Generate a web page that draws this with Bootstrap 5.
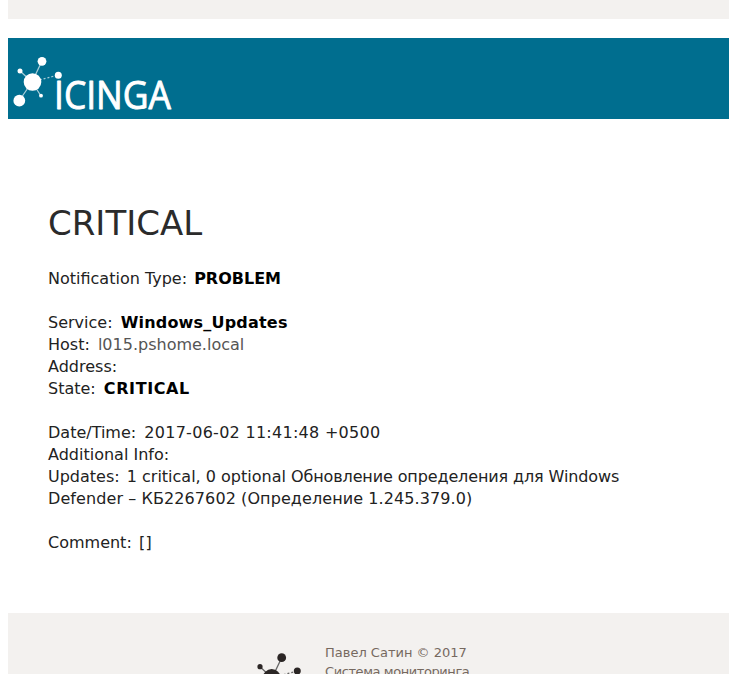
<!DOCTYPE html>
<html lang="ru">
<head>
<meta charset="utf-8">
<title>CRITICAL</title>
<link href="https://cdn.jsdelivr.net/npm/bootstrap@5.3.0/dist/css/bootstrap.min.css" rel="stylesheet">
<style>
html,body{height:674px;overflow:hidden;background:#fff}
body{padding:0 9px 0 8px;font-family:"DejaVu Sans",sans-serif;font-size:16px;line-height:22px;color:#222}
.topstrip{height:19px;background:#f3f1ef}
.brandbar{height:81px;margin-top:19px;background:#006e8f}
.brandbar svg{display:block}
.logotext{font-family:"Open Sans",sans-serif;font-size:38px;fill:#fff;stroke:#fff;stroke-width:.9px;stroke-linejoin:round}
.mailbody{padding:85px 40px 0;height:494px}
.mailbody h1{font-family:"DejaVu Sans",sans-serif;font-size:34px;line-height:38px;font-weight:400;color:#2b2b2b;margin:0 0 26px}
.mailbody b{color:#000}
.hostlink{color:#555;text-decoration:none}
.linegap{height:22px}
.lbl{margin-right:3px}
.lbl-sm{margin-right:2px}
.tight-cyr{letter-spacing:-.12px}
.wide-a{letter-spacing:.6px}
.wide-b{letter-spacing:.2px}
.wide-c{letter-spacing:.28px}
.wide-d{letter-spacing:.09px}
.footband{background:#f3f1ef;height:61px;overflow:hidden;padding-top:30px;padding-left:249px}
.footcopy{font-size:13px;line-height:19px;color:#76695f;margin-left:20px}
.foot-tight{letter-spacing:-.42px}
</style>
</head>
<body>
<div class="topstrip"></div>
<header class="brandbar">
<svg width="180" height="81" viewBox="0 0 180 81" role="img" aria-label="Icinga">
<g stroke="#fff" opacity=".65"><path d="M24 44 34 23M24 44 12 33M24 44 11 63M24 44 33 58" stroke-width="1.300"/><path d="M24 44 50 37" stroke-width="1.200" stroke-dasharray="2 2"/></g>
<g fill="#fff"><circle cx="24.500" cy="44" r="8.800"/><circle cx="34" cy="23.300" r="4.400"/><circle cx="12" cy="33" r="2.500"/><circle cx="50.300" cy="37.300" r="3.500"/><circle cx="11.300" cy="62.700" r="5.900"/><circle cx="33" cy="57.700" r="1.900"/></g>
<text class="logotext" x="46" y="71" textLength="117" lengthAdjust="spacingAndGlyphs">ICINGA</text>
</svg>
</header>
<main class="mailbody">
<h1>CRITICAL</h1>
<div><span class="lbl-sm">Notification Type:</span> <b>PROBLEM</b></div>
<div class="linegap"></div>
<div><span class="lbl">Service:</span> <b class="wide-b">Windows_Updates</b></div>
<div><span class="lbl">Host:</span> <a class="hostlink" href="#">l015.pshome.local</a></div>
<div>Address:</div>
<div><span class="lbl">State:</span> <b class="wide-a">CRITICAL</b></div>
<div class="linegap"></div>
<div><span class="lbl">Date/Time:</span> <span class="wide-c">2017-06-02 11:41:48 +0500</span></div>
<div>Additional Info:</div>
<div><span class="lbl-sm">Updates:</span> 1 critical, 0 optional <span class="tight-cyr">Обновление определения для Windows</span><br><span class="wide-d">Defender – КБ2267602 (Определение 1.245.379.0)</span></div>
<div class="linegap"></div>
<div><span class="lbl-sm">Comment:</span> <span class="wide-c">[]</span></div>
</main>
<footer class="footband d-flex">
<svg width="48" height="50" viewBox="0 0 48 50" class="flex-shrink-0" role="img" aria-label="Icinga">
<g stroke="#666" stroke-width="1.300"><path d="M15 35 24.700 14.700M15 35 3 23.700"/><path d="M15 35 40 28" stroke-dasharray="2 2"/></g>
<g fill="#2b2625"><circle cx="24.700" cy="14.700" r="4.400"/><circle cx="3" cy="23.700" r="2.600"/><circle cx="14.700" cy="35" r="9"/><circle cx="40.300" cy="28" r="3.500"/></g>
</svg>
<div class="footcopy">Павел Сатин © 2017<br><span class="foot-tight">Система мониторинга</span></div>
</footer>
</body>
</html>
